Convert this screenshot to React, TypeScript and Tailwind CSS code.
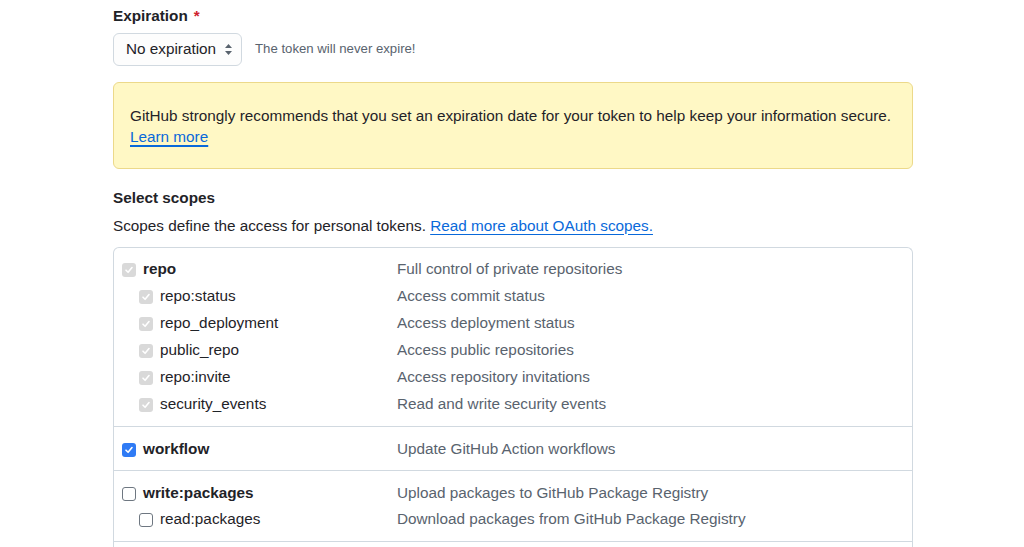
import React from "react";

type Row = { name: string; desc: string; sub?: boolean; state: "disabled" | "checked" | "empty"; bold?: boolean };

const groups: Row[][] = [
  [
    { name: "repo", desc: "Full control of private repositories", state: "disabled", bold: true },
    { name: "repo:status", desc: "Access commit status", sub: true, state: "disabled" },
    { name: "repo_deployment", desc: "Access deployment status", sub: true, state: "disabled" },
    { name: "public_repo", desc: "Access public repositories", sub: true, state: "disabled" },
    { name: "repo:invite", desc: "Access repository invitations", sub: true, state: "disabled" },
    { name: "security_events", desc: "Read and write security events", sub: true, state: "disabled" },
  ],
  [{ name: "workflow", desc: "Update GitHub Action workflows", state: "checked", bold: true }],
  [
    { name: "write:packages", desc: "Upload packages to GitHub Package Registry", state: "empty", bold: true },
    { name: "read:packages", desc: "Download packages from GitHub Package Registry", sub: true, state: "empty" },
  ],
];

function Box({ state }: { state: Row["state"] }) {
  if (state === "empty") {
    return <span className="w-[14px] h-[14px] rounded-[3px] border-[1.5px] border-[#6e7781] bg-white shrink-0" />;
  }
  const bg = state === "checked" ? "bg-[#2f7bf5]" : "bg-[#d9d9d9]";
  return (
    <span className={`w-[14px] h-[14px] rounded-[3px] ${bg} shrink-0 flex items-center justify-center`}>
      <svg width="10" height="10" viewBox="0 0 10 10" fill="none">
        <path d="M2 5.2 L4.1 7.3 L8 2.6" stroke="white" strokeWidth="1.6" strokeLinecap="round" strokeLinejoin="round" />
      </svg>
    </span>
  );
}

export default function App() {
  return (
    <div className="min-h-screen bg-white text-[#1f2328] overflow-hidden" style={{ fontFamily: '"Liberation Sans", Arial, sans-serif' }}>
      <div className="w-[800px] ml-[113px] pt-[5px]">
        <div className="flex items-center h-[22px] text-[15.3px] font-bold">
          Expiration <span className="text-[#cf222e] ml-[6px]">*</span>
        </div>
        <div className="flex items-center mt-[6px] h-[32px]">
          <div className="h-[33px] w-[129px] border border-[#d1d9e0] rounded-[6px] bg-[#fdfdfd] flex items-center pl-[12px] pr-[8px] justify-between text-[15.3px]">
            <span>No expiration</span>
            <svg width="9" height="13" viewBox="0 0 9 13">
              <path d="M4.5 1 L8 5 H1 Z" fill="#59636e" />
              <path d="M4.5 12 L8 8 H1 Z" fill="#59636e" />
            </svg>
          </div>
          <span className="ml-[13px] text-[13.2px] text-[#59636e]">The token will never expire!</span>
        </div>
        <div className="mt-[17px] h-[87px] rounded-[6px] border border-[#ecd98a] bg-[#fff8c5] px-[16px] pt-[22px] text-[15.3px] leading-[21px]">
          <div>GitHub strongly recommends that you set an expiration date for your token to help keep your information secure.</div>
          <a className="text-[#0969da] underline underline-offset-[3px] decoration-[1.5px]">Learn more</a>
        </div>
        <div className="mt-[18px] text-[15.3px] font-bold h-[22px] flex items-center">Select scopes</div>
        <div className="mt-[6px] text-[15.3px] h-[22px] flex items-center">
          Scopes define the access for personal tokens.&nbsp;
          <a className="text-[#0969da] underline underline-offset-[3px]">Read more about OAuth scopes.</a>
        </div>
        <div className="mt-[10px] border border-[#d1d9e0] rounded-t-[6px] border-b-0 pb-[20px]">
          {groups.map((g, gi) => (
            <div key={gi} className={`py-[8px] ${gi > 0 ? "border-t border-[#d1d9e0]" : ""}`}>
              {g.map((r, ri) => (
                <div key={r.name} className={`flex items-center h-[27px] text-[15.3px] ${gi > 0 && ri === 0 ? "pt-[2px]" : ""}`}>
                  <div className={`w-[283px] flex items-center gap-[7px] ${r.sub ? "pl-[25px]" : "pl-[8px]"}`}>
                    <Box state={r.state} />
                    <span className={r.bold ? "font-bold" : ""}>{r.name}</span>
                  </div>
                  <span className="text-[#59636e]">{r.desc}</span>
                </div>
              ))}
            </div>
          ))}
          <div className="border-t border-[#d1d9e0] h-[20px]" />
        </div>
      </div>
    </div>
  );
}
